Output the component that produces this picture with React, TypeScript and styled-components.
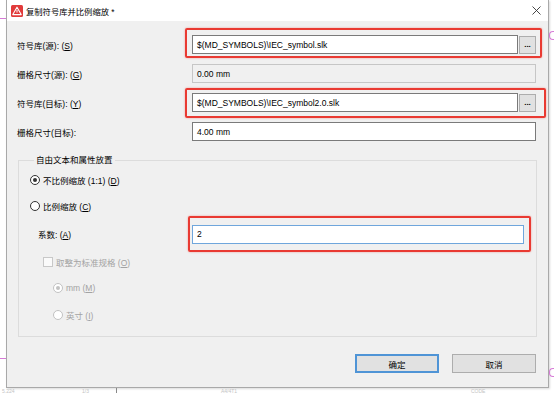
import styled, { createGlobalStyle } from "styled-components";

const GlobalStyle = createGlobalStyle`
  html, body {
    margin: 0;
    padding: 0;
    background: #fff;
  }
  body {
    font-family: "Liberation Sans", "Noto Sans CJK SC", sans-serif;
    font-size: 8.5px;
    color: #000;
  }
  * {
    box-sizing: border-box;
  }
`;

const Page = styled.div`
  width: 554px;
  height: 393px;
  overflow: hidden;
  display: grid;
  grid-template-columns: 6px 543px 1fr;
  grid-template-rows: 388px 1fr;
`;

const Edge = styled.div`
  display: flex;
  flex-direction: column;
`;

const Mark = styled.div<{ $top: number; $width?: number }>`
  margin-top: ${({ $top }) => $top}px;
  width: ${({ $width }) => $width ?? 6}px;
  height: 1px;
  background: #d77ad7;
`;

const PinkHook = styled.div<{ $top: number }>`
  margin-top: ${({ $top }) => $top}px;
  width: 5px;
  height: 9px;
  border: 1px solid #d77ad7;
  border-right: none;
  border-radius: 4px 0 0 4px;
`;

const BottomStrip = styled.div`
  grid-column: 1 / -1;
  display: flex;
  align-items: flex-start;
  font-size: 5px;
  color: #c4c4c4;
  padding-left: 2px;
`;

const Faint = styled.span<{ $w: number }>`
  width: ${({ $w }) => $w}px;
  flex: none;
`;

const Tick = styled.span<{ $w: number }>`
  width: ${({ $w }) => $w}px;
  height: 5px;
  border-left: 1px solid #888;
  flex: none;
`;

const Dialog = styled.div`
  display: flex;
  flex-direction: column;
  background: #f0f0f0;
  border: 1px solid #a9a9a9;
  border-top: none;
  box-shadow: 1px 1px 2px rgba(0, 0, 0, 0.15);
`;

const TitleBar = styled.div`
  height: 21px;
  flex: none;
  background: #fff;
  display: flex;
  align-items: center;
  gap: 3px;
  padding: 0 7px 0 4px;
`;

const Title = styled.span`
  flex: 1;
  font-size: 8.3px;
  color: #000;
`;

const Body = styled.div`
  flex: 1;
  display: flex;
  flex-direction: column;
  padding: 14px 12px 0 10px;
`;

const FieldGrid = styled.div`
  display: grid;
  grid-template-columns: 175px 1fr;
  grid-auto-rows: 19px;
  row-gap: 10px;
  align-items: center;
`;

const Label = styled.span`
  white-space: nowrap;
`;

const Key = styled.span`
  text-decoration: underline;
`;

const TextBox = styled.div<{ $variant?: "normal" | "disabled" | "focus" }>`
  height: 19px;
  flex: 1;
  display: flex;
  align-items: center;
  padding: 0 4px;
  background: ${({ $variant }) => ($variant === "disabled" ? "#f0f0f0" : "#fff")};
  border: 1px solid
    ${({ $variant }) =>
      $variant === "disabled" ? "#c6c6c6" : $variant === "focus" ? "#6fa6dc" : "#7a7a7a"};
  white-space: nowrap;
`;

const PathField = styled.div`
  flex: 1;
  display: flex;
  align-items: center;
  gap: 1px;
  height: 19px;
`;

const BrowseButton = styled.div`
  width: 17px;
  height: 18px;
  flex: none;
  display: flex;
  align-items: center;
  justify-content: center;
  background: #e1e1e1;
  border: 1px solid #adadad;
  font-weight: bold;
  font-size: 8px;
  line-height: 1;
`;

const Highlight = styled.div<{ $t: number; $r: number; $b: number; $l: number }>`
  position: relative;
  display: flex;
  align-items: center;
  height: 19px;
  &::after {
    content: "";
    position: absolute;
    top: ${({ $t }) => -$t}px;
    right: ${({ $r }) => -$r}px;
    bottom: ${({ $b }) => -$b}px;
    left: ${({ $l }) => -$l}px;
    border: 2px solid #e93a32;
    border-radius: 2px;
    box-shadow: 0 0 2px rgba(240, 40, 30, 0.45);
    pointer-events: none;
  }
`;

const Group = styled.fieldset`
  margin: 13px -1px 0 1px;
  padding: 1px 12px 8px 11px;
  border: 1px solid #dcdcdc;
  min-width: 0;
`;

const Legend = styled.legend`
  margin-left: 4px;
  padding: 0 2px;
  line-height: 12px;
`;

const OptionRow = styled.div<{ $indent: number; $height: number; $disabled?: boolean }>`
  display: flex;
  align-items: center;
  gap: 3px;
  height: ${({ $height }) => $height}px;
  padding-left: ${({ $indent }) => $indent}px;
  color: ${({ $disabled }) => ($disabled ? "#a3a3a3" : "#000")};
  white-space: nowrap;
`;

const OptionText = styled.span``;

const CoefRow = styled.div`
  display: grid;
  grid-template-columns: 162px 1fr;
  align-items: center;
  height: 30px;
`;

const CoefLabel = styled.span`
  padding-left: 8px;
`;

const Radio = styled.span<{ $disabled?: boolean }>`
  width: 10px;
  height: 10px;
  flex: none;
  border-radius: 50%;
  display: flex;
  align-items: center;
  justify-content: center;
  background: #fff;
  border: 1px solid ${({ $disabled }) => ($disabled ? "#c2c2c2" : "#333")};
`;

const RadioDot = styled.span<{ $disabled?: boolean }>`
  width: 4px;
  height: 4px;
  border-radius: 50%;
  background: ${({ $disabled }) => ($disabled ? "#c2c2c2" : "#333")};
`;

const CheckBox = styled.span`
  width: 10px;
  height: 10px;
  flex: none;
  background: #fafafa;
  border: 1px solid #c8c8c8;
`;

const ButtonRow = styled.div`
  display: flex;
  justify-content: flex-end;
  gap: 13px;
  margin-top: 17px;
`;

const Button = styled.div<{ $default?: boolean }>`
  width: 84px;
  height: 19px;
  display: flex;
  align-items: center;
  justify-content: center;
  background: #e1e1e1;
  border: ${({ $default }) => ($default ? "2px solid #4f94d6" : "1px solid #adadad")};
`;

const AppIcon = () => (
  <svg width="12" height="12" viewBox="0 0 12 12">
    <rect x="0" y="0" width="12" height="12" rx="1.5" fill="#e13b3b" />
    <path d="M6 2.2 L10.2 9.6 H1.8 Z" fill="none" stroke="#fff" strokeWidth="1.1" strokeLinejoin="round" />
    <path d="M6 5 V7.6" stroke="#fff" strokeWidth="1" />
  </svg>
);

const CloseIcon = () => (
  <svg width="9" height="9" viewBox="0 0 9 9">
    <path d="M0.5 0.5 L8.5 8.5 M8.5 0.5 L0.5 8.5" stroke="#333" strokeWidth="0.9" />
  </svg>
);

const App = () => {
  return (
    <>
      <GlobalStyle />
      <Page>
        <Edge>
          <Mark $top={18} />
          <Mark $top={339} />
        </Edge>
        <Dialog>
          <TitleBar>
            <AppIcon />
            <Title>复制符号库并比例缩放 *</Title>
            <CloseIcon />
          </TitleBar>
          <Body>
            <FieldGrid>
              <Label>
                符号库(源): (<Key>S</Key>)
              </Label>
              <Highlight $t={7} $r={6} $b={4} $l={7}>
                <PathField>
                  <TextBox>$(MD_SYMBOLS)\IEC_symbol.slk</TextBox>
                  <BrowseButton>...</BrowseButton>
                </PathField>
              </Highlight>

              <Label>
                栅格尺寸(源): (<Key>G</Key>)
              </Label>
              <TextBox $variant="disabled">0.00 mm</TextBox>

              <Label>
                符号库(目标): (<Key>Y</Key>)
              </Label>
              <Highlight $t={5} $r={10} $b={6} $l={7}>
                <PathField>
                  <TextBox>$(MD_SYMBOLS)\IEC_symbol2.0.slk</TextBox>
                  <BrowseButton>...</BrowseButton>
                </PathField>
              </Highlight>

              <Label>栅格尺寸(目标):</Label>
              <TextBox>4.00 mm</TextBox>
            </FieldGrid>

            <Group>
              <Legend>自由文本和属性放置</Legend>
              <OptionRow $indent={0} $height={26}>
                <Radio>
                  <RadioDot />
                </Radio>
                <OptionText>
                  不比例缩放 (1:1) (<Key>D</Key>)
                </OptionText>
              </OptionRow>
              <OptionRow $indent={0} $height={26}>
                <Radio />
                <OptionText>
                  比例缩放 (<Key>C</Key>)
                </OptionText>
              </OptionRow>
              <CoefRow>
                <CoefLabel>
                  系数: (<Key>A</Key>)
                </CoefLabel>
                <Highlight $t={9} $r={7} $b={8} $l={4}>
                  <TextBox $variant="focus">2</TextBox>
                </Highlight>
              </CoefRow>
              <OptionRow $indent={13} $height={26} $disabled>
                <CheckBox />
                <OptionText>
                  取整为标准规格 (<Key>O</Key>)
                </OptionText>
              </OptionRow>
              <OptionRow $indent={23} $height={26} $disabled>
                <Radio $disabled>
                  <RadioDot $disabled />
                </Radio>
                <OptionText>
                  mm (<Key>M</Key>)
                </OptionText>
              </OptionRow>
              <OptionRow $indent={23} $height={27} $disabled>
                <Radio $disabled />
                <OptionText>
                  英寸 (<Key>I</Key>)
                </OptionText>
              </OptionRow>
            </Group>

            <ButtonRow>
              <Button $default>确定</Button>
              <Button>取消</Button>
            </ButtonRow>
          </Body>
        </Dialog>
        <Edge>
          <PinkHook $top={31} />
          <PinkHook $top={328} />
        </Edge>
        <BottomStrip>
          <Faint $w={80}>5.224</Faint>
          <Faint $w={34}>1/3</Faint>
          <Tick $w={105} />
          <Faint $w={250}>A4/4T1</Faint>
          <Faint $w={40}>CODE</Faint>
        </BottomStrip>
      </Page>
    </>
  );
};

export default App;
